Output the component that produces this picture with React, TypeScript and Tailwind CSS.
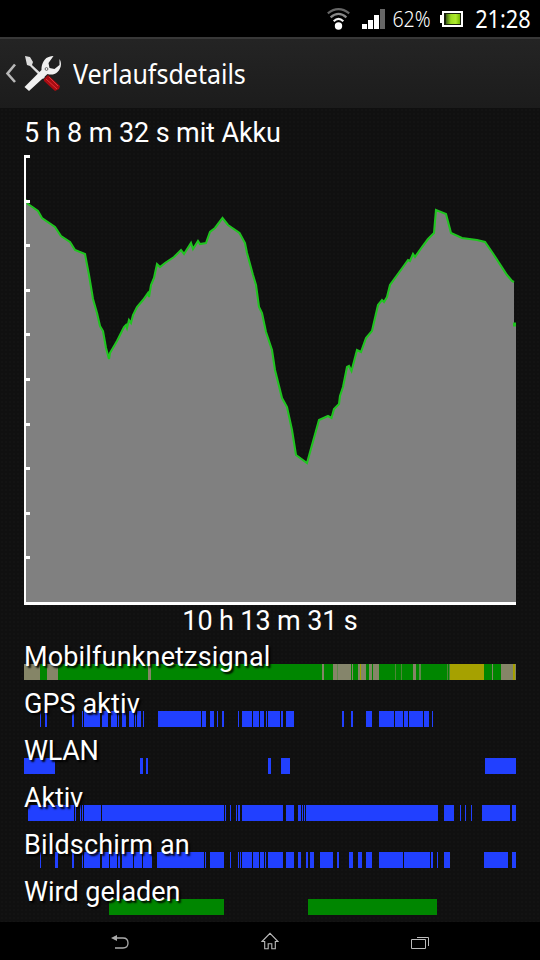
type Segment = [start: number, end: number, color?: string];

type Timeline = {
  label: string;
  color: string;
  segments: Segment[];
  tracking?: string;
};

const KHAKI = "#858567";
const OLIVE = "#a6a100";
const GREEN = "#008600";
const BLUE = "#2140ff";

// Start and end values share the x axis of the battery chart (24 - 516)
const timelines: Timeline[] = [
  {
    label: "Mobilfunknetzsignal",
    color: GREEN,
    tracking: "tracking-[0.16px]",
    segments: [
      [24, 516],
      [24, 40, KHAKI],
      [47, 58, KHAKI],
      [148, 151, KHAKI],
      [322, 324, KHAKI],
      [333, 337, KHAKI],
      [337, 338, "#5f874c"],
      [338, 351, "#85856b"],
      [352, 353, KHAKI],
      [358, 366, KHAKI],
      [360, 361, OLIVE],
      [369, 372, KHAKI],
      [373, 379, KHAKI],
      [395, 396, "#4f8738"],
      [401, 402, "#4f8738"],
      [413, 416, KHAKI],
      [419, 421, "#5f874c"],
      [447, 448, "#4f8738"],
      [449, 450, "#4f8738"],
      [450, 484, OLIVE],
      [492, 493, KHAKI],
      [501, 513, KHAKI],
      [513, 515, OLIVE],
      [515, 516, KHAKI],
    ],
  },
  {
    label: "GPS aktiv",
    color: BLUE,
    tracking: "tracking-[0.1px]",
    segments: [
      [40, 41], [45, 47], [72, 74], [82, 83], [84, 100], [102, 108], [111, 117], [118, 119],
      [122, 126], [129, 134], [135, 136], [137, 141], [143, 144], [158, 201], [202, 206],
      [210, 214], [217, 218], [222, 224], [238, 239], [242, 252], [253, 259], [260, 264],
      [266, 267], [268, 280], [281, 283], [286, 294], [342, 344], [351, 353], [366, 372],
      [379, 394], [395, 403], [404, 408], [409, 423], [424, 429], [432, 433],
    ],
  },
  {
    label: "WLAN",
    color: BLUE,
    tracking: "tracking-[-0.3px]",
    segments: [[24, 55], [140, 143], [146, 148], [268, 271], [281, 290], [485, 516]],
  },
  {
    label: "Aktiv",
    color: BLUE,
    tracking: "tracking-[-0.15px]",
    segments: [
      [28, 74], [75, 76], [80, 81], [82, 83], [84, 101], [102, 224], [225, 226], [230, 231],
      [236, 237], [238, 240], [242, 283], [286, 294], [298, 301], [302, 303], [304, 305],
      [306, 438], [444, 454], [460, 461], [465, 466], [471, 472], [482, 510], [512, 516],
    ],
  },
  {
    label: "Bildschirm an",
    color: BLUE,
    tracking: "tracking-[0.16px]",
    segments: [
      [40, 41], [55, 58], [72, 74], [82, 83], [84, 100], [102, 109], [110, 117], [118, 120],
      [122, 133], [134, 142], [143, 152], [157, 204], [204.5, 206], [210, 224], [230, 231],
      [238, 239], [240, 241], [242, 252], [253, 259], [260, 264], [265, 266], [268, 283],
      [286, 294], [298, 301], [306, 308], [310, 314], [320, 333], [337, 339], [349, 353],
      [358, 362], [366, 372], [379, 403], [404, 430], [431, 433], [437, 438], [444, 450],
      [484, 508], [512, 516],
    ],
  },
  {
    label: "Wird geladen",
    color: GREEN,
    segments: [[109, 224], [308, 437]],
  },
];

const levels =
  "25,199 28,204 31,206 38,211 42,218 55,227 61,236 70,242 75,250 85,254 89,275 93,299 97,313 100,326 103,331 106,348 109,359 110,353 117,341 124,327 126,325 127,328 129,320 131,323 133,315 137,307 143,300 148,293 149,297 151,285 154,278 157,264 160,267 165,263 174,257 181,250 184,254 191,243 193,249 198,241 200,244 206,243 210,232 215,228 222.5,218 228,225 239.5,233 245,243 247,253 253,275 256,285 259,307 262,313 266,332 272,350 275,370 282,398 287,407 292,430 296,455 307,463 319,420 328,416 331.5,418 334,409 339,404 340,396 343,387 347,367 349,366 351.5,371 357,350 361,352 366,338 372,331 378,305 382,300 384,302 387,297 390,285 403,267 408,260 410,261 413,254 415,257 422,247 428,239 434,233 436,210 446,214 451,233 462,238 477,240 485,242 492,252 507,275 512,281 514,282";

const ticks = Array.from({ length: 10 }, (_, i) => Math.round(155 + i * 44.6));

const StatusBar = () => (
  <div className="flex h-[37px] shrink-0 items-center justify-end bg-black pr-[9px]">
    <svg className="mr-3 h-6 w-[23px]" viewBox="0 0 23 24" fill="none">
      <circle cx="11.5" cy="19" r="3.7" fill="#fff" />
      <path d="M6.7 14.2Q11.5 9.6 16.3 14.2" stroke="#eee" strokeWidth="2.2" />
      <path d="M3.6 10.3Q11.5 3.4 19.4 10.3" stroke="#888" strokeWidth="2.2" />
      <path d="M.8 6.4Q11.5-2 22.2 6.4" stroke="#666" strokeWidth="2.2" />
    </svg>
    <svg className="mr-2 h-5 w-[23px]" viewBox="0 0 23 20">
      <path d="M0 15h5v5H0zM6 11h5v9H6zM12 6h5v14h-5z" fill="#fff" />
      <path d="M18 0h5v20h-5z" fill="#666" />
    </svg>
    <span className="flex w-[38px] justify-center whitespace-nowrap pt-px font-['Noto_Sans',sans-serif] text-[21px] font-light leading-9 text-white">
      <span className="scale-x-[0.93]">62%</span>
    </span>
    <svg className="ml-[9px] mr-3 h-4 w-[23px]" viewBox="0 0 23 16">
      <defs>
        <linearGradient id="charge">
          <stop offset="0" stopColor="#40601a" />
          <stop offset=".35" stopColor="#9bdc20" />
          <stop offset=".7" stopColor="#aeea2d" />
          <stop offset="1" stopColor="#72b800" />
        </linearGradient>
      </defs>
      <path d="M0 4h2V0h21v16H2v-4H0z" fill="#fff" />
      <path d="M4 2h17v12H4z" fill="#17200c" />
      <path d="M6 3h14v10H6z" fill="url(#charge)" />
    </svg>
    <span className="flex w-[56px] justify-center pb-0.5 font-['Noto_Sans',sans-serif] text-[25px] leading-9 text-white">
      <span className="scale-x-[0.87]">21:28</span>
    </span>
  </div>
);

const ToolsIcon = () => (
  <svg className="h-[38px] w-[38px]" viewBox="0 0 38 38">
    <path d="M1 1l5 1 3 5-1 3 13 12-2 2L6 11l-3-1z" fill="#ddd" />
    <path d="M20 24l4-4 12 11-1 3-4 2-11-10z" fill="#a80c12" />
    <path d="M22 24l11 10M25 22l9 9" stroke="#df3438" strokeWidth="1" />
    <path
      d="M.5 32l17-17c0-2 0-6 3-10 2-3 6-4 9-4l-5 7 1 5 5 1 5-4 0-6c3 5 1 10-2 13-3 3-7 3-10 2L5 36z"
      fill="#f1f1f1"
    />
    <circle cx="22.5" cy="14" r="1.4" fill="#fff" stroke="#555" strokeWidth=".9" />
  </svg>
);

const ActionBar = () => (
  <header className="flex h-[71px] shrink-0 items-center border-t-2 border-[#383838] bg-linear-to-b from-[#242424] to-[#1c1c1c] pl-[5px]">
    <svg className="h-[21px] w-[12px]" viewBox="0 0 12 21" fill="none">
      <path d="M10 1.5L2.5 10.5 10 19" stroke="#b8b8b8" strokeWidth="2.6" />
    </svg>
    <div className="ml-[7px]">
      <ToolsIcon />
    </div>
    <h1 className="ml-[11px] origin-left scale-x-[0.926] pt-0.5 font-['Noto_Sans',sans-serif] text-[27px] text-white">
      Verlaufsdetails
    </h1>
  </header>
);

const BatteryChart = () => (
  <svg className="h-[450px] w-[492px] shrink-0" viewBox="24 155 492 450">
    <polygon points={`25,603 ${levels} 514,325 516,325 516,603`} fill="#808080" />
    <polyline points={levels} fill="none" stroke="#20c420" strokeWidth="2.1" />
    <path d="M513 324.5h3" stroke="#20c420" strokeWidth="4" />
    <path d="M24 155h2v450h-2zM24 602h492v3H24z" fill="#fff" />
    {ticks.map((y) => (
      <rect key={y} x="24" y={y} width="6" height="3" fill="#fff" />
    ))}
  </svg>
);

const TimelineRow = ({ label, color, segments, tracking = "" }: Timeline) => (
  <div className="flex h-[47px] shrink-0 flex-col last:h-[45px]">
    <span
      className={`z-10 h-7 whitespace-nowrap pt-px text-[27px] leading-7 [text-shadow:2px_2px_2px_#000] ${tracking}`}
    >
      {label}
    </span>
    <svg
      className="-mt-1.5 h-4 w-[492px] shrink-0"
      viewBox="24 0 492 16"
      shapeRendering="crispEdges"
    >
      {segments.map(([start, end, fill]) => (
        <rect key={`${start}-${end}`} x={start} width={end - start} height="16" fill={fill ?? color} />
      ))}
    </svg>
  </div>
);

const NavBar = () => (
  <nav className="flex h-[38px] shrink-0 items-center justify-center bg-black">
    <div className="flex w-[150px] justify-center">
      <svg className="mt-0.5 h-[14px] w-[18px]" viewBox="0 0 18 14" fill="none">
        <path d="M3 3h9q5 0 5 5t-5 5H4" stroke="#aaa" strokeWidth="1.3" />
        <path d="M0 3l6-3v6z" fill="#aaa" />
      </svg>
    </div>
    <div className="flex w-[150px] justify-center">
      <svg className="h-[18px] w-[18px]" viewBox="0 0 18 18" fill="none">
        <path
          d="M1 9.5L9 1.3l8 8.2h-2.7v7.3h-3.5v-5H7.2v5H3.7V9.5z"
          stroke="#bbb"
          strokeWidth="1.1"
        />
      </svg>
    </div>
    <div className="flex w-[150px] justify-center">
      <svg className="mt-1 h-3 w-[18px]" viewBox="0 0 18 12" fill="none">
        <path d="M.5 2.5h14v9H.5z" stroke="#bbb" />
        <path d="M6 .5h11.5V9" stroke="#bbb" />
      </svg>
    </div>
  </nav>
);

const App = () => {
  return (
    <div className="flex h-[960px] w-[540px] flex-col overflow-hidden bg-[#101010] font-[Roboto,sans-serif] text-white">
      <StatusBar />
      <ActionBar />
      <main className="flex grow flex-col bg-[radial-gradient(#131313_1px,transparent_1px)] bg-[length:4px_4px] px-6 pt-[10px]">
        <h2 className="mb-[7px] h-[30px] shrink-0 text-[27px] leading-[30px] tracking-[-0.1px]">
          5 h 8 m 32 s mit Akku
        </h2>
        <BatteryChart />
        <p className="h-[37px] shrink-0 text-center text-[27px] leading-8 tracking-[-0.12px]">
          10 h 13 m 31 s
        </p>
        {timelines.map((timeline) => (
          <TimelineRow key={timeline.label} {...timeline} />
        ))}
      </main>
      <NavBar />
    </div>
  );
};

export default App;
